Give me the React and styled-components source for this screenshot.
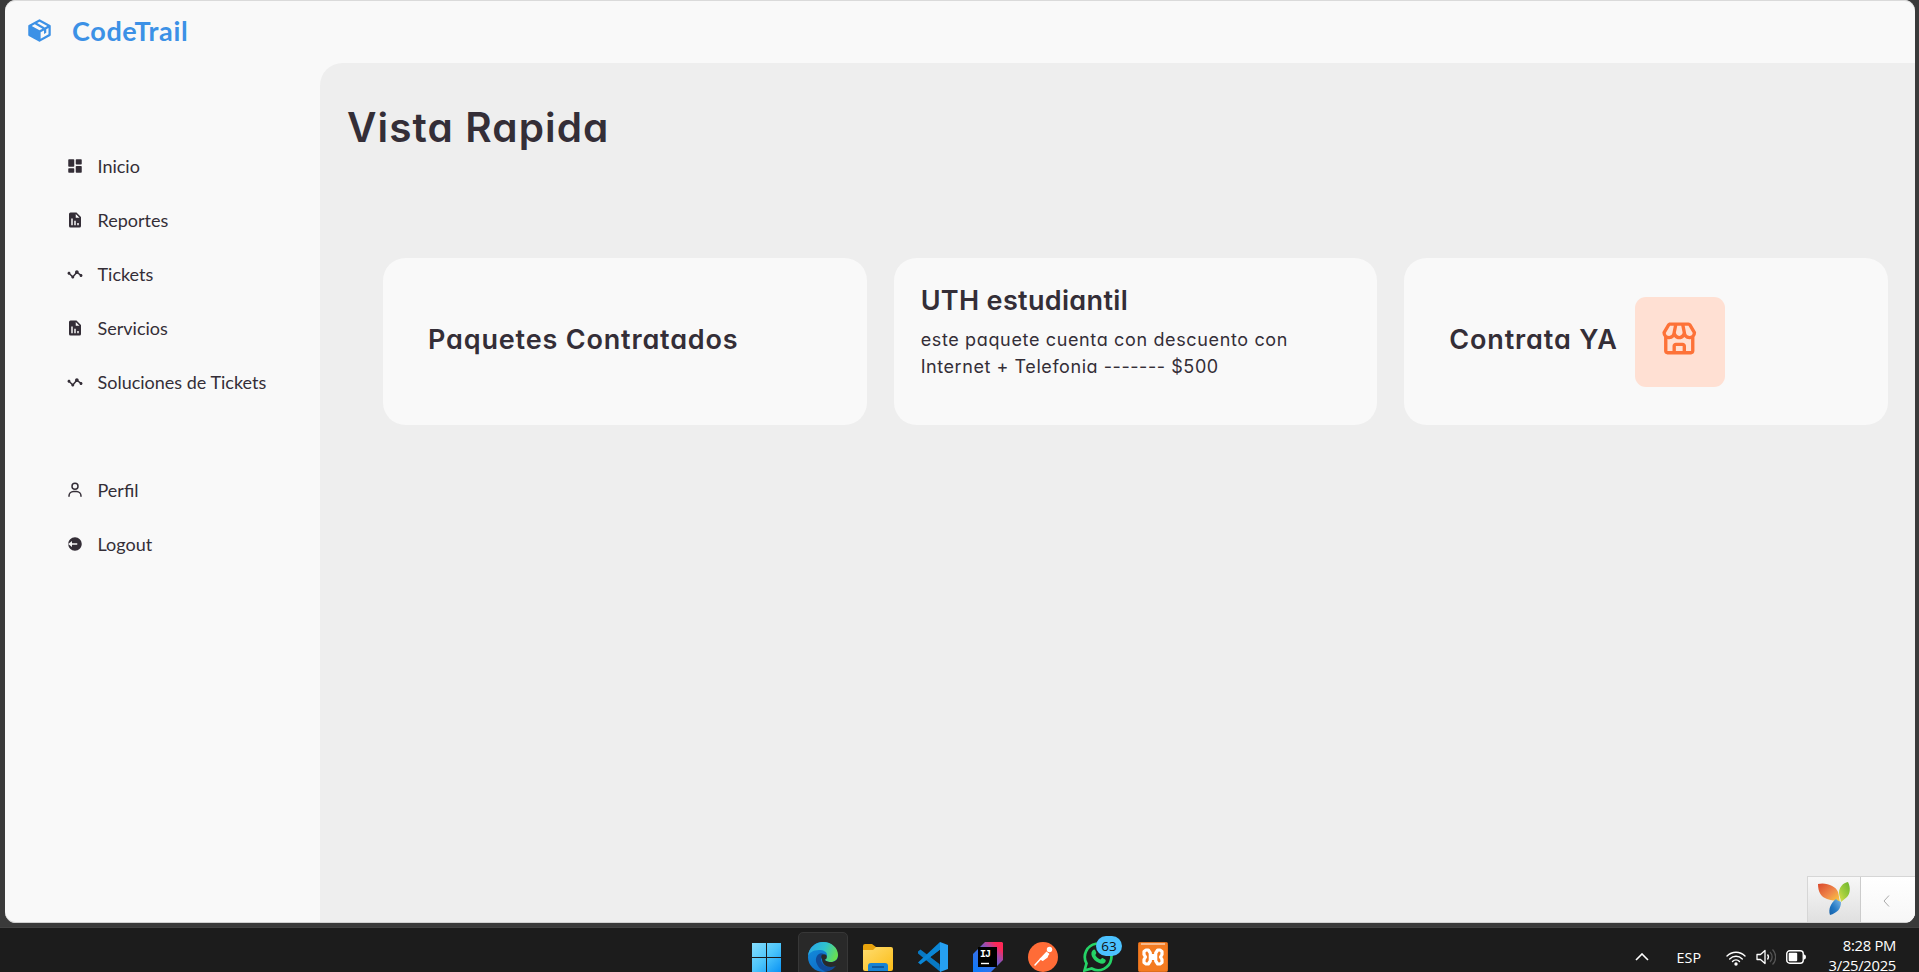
import React from 'react';
import styled, { createGlobalStyle } from 'styled-components';
import {
  BiSolidPackage,
  BiSolidDashboard,
  BiSolidReport,
  BiStats,
  BiUser,
  BiSolidLogOutCircle,
  BiStore,
} from 'react-icons/bi';

const GlobalStyle = createGlobalStyle`
  * { box-sizing: border-box; margin: 0; padding: 0; }
  html, body { background: #1c1c1c; overflow: hidden; }
  svg { display: block; }
`;

const Desktop = styled.div`
  width: 1919px;
  height: 972px;
  display: flex;
  flex-direction: column;
  background: #1c1c1c;
`;

const Frame = styled.div`
  height: 928px;
  padding: 0 4px 5px 5px;
  background: #3a3a3a;
  border-bottom: 1px solid #424242;
`;

const BrowserWindow = styled.div`
  position: relative;
  display: flex;
  width: 1910px;
  height: 923px;
  background: #f9f9f9;
  border-radius: 11px;
  overflow: hidden;
  box-shadow: inset 0 1px 0 #dadada, inset 0 -1px 0 #d0d0d0;
  color: #342e37;
  font-family: Lato, sans-serif;
`;

const Sidebar = styled.aside`
  width: 315px;
  flex: none;
`;

const Brand = styled.div`
  display: flex;
  align-items: center;
  height: 63px;
  padding-bottom: 2px;
  color: #3c91e6;
  font-size: 27px;
  font-weight: 700;
  letter-spacing: 0.65px;
`;

const BrandIcon = styled.span`
  width: 67px;
  display: flex;
  justify-content: center;
  padding-left: 1px;
`;

const Menu = styled.ul`
  list-style: none;
  padding-left: 43px;
  margin-top: ${(p) => p.$top}px;
`;

const MenuItem = styled.li`
  display: flex;
  align-items: center;
  height: 54px;
  font-size: 18px;
`;

const MenuIcon = styled.span`
  width: 49.5px;
  display: flex;
  justify-content: center;
  padding-left: 5px;
  font-size: 18px;
`;

const Column = styled.div`
  flex: 1;
  padding-top: 63px;
`;

const Content = styled.main`
  height: 859px;
  padding: 40px 27px 0;
  background: #eee;
  border-radius: 22.5px 0 0 0;
  font-family: Inter, sans-serif;
  font-feature-settings: 'cv11';
`;

const PageTitle = styled.h1`
  height: 51px;
  line-height: 49px;
  font-size: 40.5px;
  font-weight: 600;
  letter-spacing: 1.1px;
`;

const Cards = styled.section`
  display: grid;
  grid-template-columns: repeat(3, 1fr);
  gap: 27px;
  margin-top: 104px;
  padding-left: 36px;
`;

const Card = styled.article`
  display: flex;
  align-items: center;
  height: 167px;
  padding: 0 27px 0 ${(p) => p.$left}px;
  background: #f9f9f9;
  border-radius: 22.5px;
`;

const CardTitle = styled.h3`
  padding-bottom: ${(p) => p.$lift || 0}px;
  font-size: 27px;
  line-height: 36px;
  font-weight: 600;
  letter-spacing: ${(p) => p.$spacing}px;
  white-space: nowrap;
`;

const CardBody = styled.div`
  height: 118px;
`;

const CardText = styled.p`
  margin-top: ${(p) => (p.$first ? 7 : 0)}px;
  font-size: 18px;
  line-height: 27px;
  letter-spacing: ${(p) => p.$spacing}px;
  white-space: nowrap;
`;

const StoreTile = styled.div`
  display: flex;
  justify-content: center;
  width: 90px;
  height: 90px;
  margin-left: 17px;
  padding: 22px 1px 0 0;
  border-radius: 11px;
  background: #ffe0d3;
  color: #fd7238;
  font-size: 40.5px;
`;

const DebugBar = styled.div`
  position: absolute;
  right: 0;
  bottom: 1px;
  display: flex;
  width: 108px;
  height: 46px;
  border: 1px solid #d6d6d6;
  border-right: 0;
  border-bottom: 0;
`;

const DebugLogo = styled.div`
  width: 53px;
  background: linear-gradient(#f7f7f7, #e0e0e0);
  border-right: 1px solid #ccc;
`;

const DebugToggle = styled.div`
  flex: 1;
  display: flex;
  align-items: center;
  justify-content: center;
  padding: 2px 3px 0 0;
  background: linear-gradient(#fff, #f7f7f7);
`;

const Taskbar = styled.footer`
  display: flex;
  height: 44px;
  padding-left: 742px;
  color: #fff;
  font-family: 'Open Sans', sans-serif;
  overflow: hidden;
`;

const AppSlot = styled.div`
  position: relative;
  flex: none;
  width: 50px;
  height: 50px;
  margin: 4px 5px 0 0;
  padding: 9px;
  border-radius: 5px;
  border: 1px solid ${(p) => (p.$active ? '#373737' : 'transparent')};
  background: ${(p) => (p.$active ? '#292929' : 'transparent')};

  &:first-child { margin-right: 6px; }
`;

const Badge = styled.span`
  position: absolute;
  left: 22px;
  top: 3px;
  width: 26px;
  height: 20px;
  border-radius: 10px;
  background: #4cc2ff;
  color: #111;
  font-size: 13.5px;
  line-height: 20px;
  text-align: center;
`;

const Tray = styled.div`
  display: flex;
  flex: 1;
  justify-content: flex-end;
  padding-right: 23px;
`;

const TrayItem = styled.div`
  height: ${(p) => p.$h || 60}px;
  margin-right: ${(p) => p.$gap}px;
  display: flex;
  align-items: center;
  font-size: 14.3px;
`;

const Clock = styled.div`
  width: 70px;
  padding-top: 8px;
  text-align: right;
  font-size: 14.8px;
  line-height: 19.5px;
  letter-spacing: -0.3px;
  white-space: nowrap;
`;

const mainItems = [
  ['Inicio', BiSolidDashboard],
  ['Reportes', BiSolidReport],
  ['Tickets', BiStats],
  ['Servicios', BiSolidReport],
  ['Soluciones de Tickets', BiStats],
];

const accountItems = [
  ['Perfil', BiUser],
  ['Logout', BiSolidLogOutCircle],
];

function MenuList({ items, top }) {
  return (
    <Menu $top={top}>
      {items.map(([label, Icon]) => (
        <MenuItem key={label}>
          <MenuIcon><Icon /></MenuIcon>
          {label}
        </MenuItem>
      ))}
    </Menu>
  );
}

function YiiLogo() {
  return (
    <svg width="52" height="45" viewBox="0 0 52 45">
      <defs>
        <linearGradient id="yo" x1="0" y1="0" x2="1" y2="1">
          <stop offset="0" stopColor="#d9472b" /><stop offset=".55" stopColor="#f08a4b" /><stop offset="1" stopColor="#fbd23c" />
        </linearGradient>
        <linearGradient id="yg" x1="1" y1="0" x2="0" y2="1">
          <stop offset="0" stopColor="#6cb52d" /><stop offset=".6" stopColor="#a5cf3f" /><stop offset="1" stopColor="#e4e04a" />
        </linearGradient>
        <linearGradient id="yb" x1="1" y1="0" x2="0" y2="1">
          <stop offset="0" stopColor="#7fb9e6" /><stop offset=".6" stopColor="#2378c3" /><stop offset="1" stopColor="#155fa8" />
        </linearGradient>
      </defs>
      <path d="M10 7c8-2 18 2 20 8 1 3 1 7 2 10-4-2-8-1-13-3C13 20 10 15 10 7z" fill="url(#yo)" />
      <path d="M40 5c3 6 2 12-1 15-2 2-4 3-6 5 0-3-2-6-2-9 0-6 4-10 9-11z" fill="url(#yg)" />
      <path d="M28 22c2 2 4 2 5 3 0 7-4 11-11 13-2-6 1-12 6-16z" fill="url(#yb)" />
    </svg>
  );
}

function WindowsLogo() {
  return (
    <svg width="30" height="30" viewBox="0 0 30 30">
      <defs>
        <linearGradient id="win" gradientUnits="userSpaceOnUse" x1="1" y1="1" x2="29" y2="30">
          <stop offset="0" stopColor="#84ddfd" /><stop offset=".5" stopColor="#4cc5fb" /><stop offset="1" stopColor="#0a93f5" />
        </linearGradient>
      </defs>
      <path d="M0 1h14v14H0zM15 1h14v14H15zM0 16h14v14H0zM15 16h14v14H15z" fill="url(#win)" />
    </svg>
  );
}

function EdgeLogo() {
  return (
    <svg width="30" height="30" viewBox="0 0 30 30">
      <defs>
        <linearGradient id="e1" x1="0" y1=".3" x2="1" y2=".6">
          <stop offset="0" stopColor="#2aa7e6" /><stop offset=".5" stopColor="#2fc3cf" /><stop offset="1" stopColor="#6be04a" />
        </linearGradient>
        <linearGradient id="e2" x1="0" y1="0" x2=".6" y2="1">
          <stop offset="0" stopColor="#1592df" /><stop offset="1" stopColor="#0c6ac6" />
        </linearGradient>
      </defs>
      <circle cx="15" cy="15" r="15" fill="url(#e2)" />
      <path d="M0 14C1 5 8 0 15 0c9 0 15 6 15 13 0 5-4 7-7 7-4 0-6-1-6-3 0-1 2-1 2-4 0-3-3-5-8-5-6 0-10 3-11 6z" fill="url(#e1)" />
      <path d="M11 12c-3 2-4 6-2 10 2 5 7 8 12 7 3-1 5-3 7-5-8 3-15-1-15-7 0-2 1-4 3-5-2-1-4-1-5 0z" fill="#114a97" />
      <path d="M30 14v8l-2 2c-8 3-14-1-14-7 0-2 1-3 3-4-2 5 1 7 6 7 3 0 7-2 7-6z" fill="#292929" />
      <circle cx="16" cy="15" r="2.8" fill="#292929" />
    </svg>
  );
}

function FolderIcon() {
  return (
    <svg width="30" height="30" viewBox="0 0 30 30">
      <defs>
        <linearGradient id="fo" x1="0" y1="0" x2="1" y2="1">
          <stop offset="0" stopColor="#ffdd70" /><stop offset="1" stopColor="#fbbc16" />
        </linearGradient>
      </defs>
      <path d="M0 4a2 2 0 0 1 2-2h7l4 3h13v6H0z" fill="#e8a30c" />
      <path d="M0 8h10l3-3h15a2 2 0 0 1 2 2v20a2 2 0 0 1-2 2H2a2 2 0 0 1-2-2z" fill="url(#fo)" />
      <path d="M5 29v-5a3 3 0 0 1 3-3h14a3 3 0 0 1 3 3v5z" fill="#1683d4" />
      <path d="M9 25h12" stroke="#0c4a88" strokeWidth="1.4" />
    </svg>
  );
}

function CodeLogo() {
  return (
    <svg width="30" height="30" viewBox="0 0 30 30">
      <path d="M0 9.500l2.500-2 19 14.500 1 8L0 11.500z" fill="#0879c4" />
      <path d="M0 20.500L22 0v8L2.500 22.500 0 20.500z" fill="#0a86d6" />
      <path d="M22 0l8 3v24l-8 3z" fill="#26a0f2" />
      <path d="M22 8v14l-9-7z" fill="#1c1c1c" />
    </svg>
  );
}

function IdeaLogo() {
  return (
    <svg width="30" height="30" viewBox="0 0 30 30">
      <defs>
        <linearGradient id="ij" x1="0" y1="1" x2="1" y2="0">
          <stop offset="0" stopColor="#087cfa" /><stop offset=".45" stopColor="#3b6fe8" /><stop offset=".7" stopColor="#b0459f" /><stop offset=".85" stopColor="#fe2857" />
        </linearGradient>
      </defs>
      <path d="M12 0h17l1 1v17L18 30H0V12z" fill="url(#ij)" />
      <path d="M5 5h19v20H5z" fill="#000" />
      <text x="7" y="15" fill="#fff" fontFamily="Liberation Mono, monospace" fontWeight="700" fontSize="10" letterSpacing="-1">IJ</text>
      <path d="M8 21.500h8" stroke="#fff" strokeWidth="1.4" />
    </svg>
  );
}

function PostmanLogo() {
  return (
    <svg width="30" height="30" viewBox="0 0 30 30">
      <circle cx="15" cy="15" r="15" fill="#ff6c37" />
      <circle cx="21.500" cy="7.500" r="2.700" fill="#fff" />
      <path d="M18.500 9.500l3 2.500-7 7-3-2z" fill="#fff" />
      <path d="M13 16.500l-6 6.500M20 12l-1 3-4 3" stroke="#fff" strokeWidth="1.500" fill="none" strokeLinecap="round" />
    </svg>
  );
}

function WhatsAppLogo() {
  return (
    <svg width="30" height="30" viewBox="0 0 30 30">
      <path d="M1.500 28.500l2-7.200A13.300 13.300 0 1 1 8.700 26.500z" fill="none" stroke="#25d366" strokeWidth="2.700" />
      <path d="M10 8c1-1 2-.5 2.300.3l1 2.400c.3.700-1 2-1 2.300 1 2.200 3 3.800 5 4.600.6 0 1.500-1.800 2.200-1.500l2.700 1.300c1 .6.500 2.300-.5 3.300-1.300 1.300-3.500 1.300-6 .1-3.700-1.600-5.500-3.800-6.700-6.300C7.800 11.500 8.500 9.300 10 8z" fill="#25d366" />
    </svg>
  );
}

function XamppLogo() {
  return (
    <svg width="30" height="30" viewBox="0 0 30 30">
      <rect width="30" height="30" rx="3" fill="#f47b20" stroke="#c9641a" />
      <path d="M3 2h24" stroke="#f9b98a" strokeWidth="2" />
      <g fill="none" stroke="#fff" strokeWidth="3.200" strokeLinecap="round" strokeLinejoin="round">
        <path d="M12.300 11l-2-3H8L6 9.500v3L7.500 15 6 17.500v3L8 22h2.300l2-3v-4z" />
        <path d="M17.700 11l2-3H22l2 1.500v3L22.500 15l1.500 2.500v3L22 22h-2.300l-2-3v-4z" />
        <path d="M12 15h6" strokeWidth="6" strokeLinecap="butt" />
      </g>
    </svg>
  );
}

export default function App() {
  return (
    <Desktop>
      <GlobalStyle />
      <Frame>
        <BrowserWindow>
          <Sidebar>
            <Brand>
              <BrandIcon><BiSolidPackage /></BrandIcon>
              CodeTrail
            </Brand>
            <MenuList items={mainItems} top={76} />
            <MenuList items={accountItems} top={54} />
          </Sidebar>
          <Column>
            <Content>
              <PageTitle>Vista Rapida</PageTitle>
              <Cards>
                <Card $left={45}>
                  <CardTitle $spacing={0.83} $lift={3}>Paquetes Contratados</CardTitle>
                </Card>
                <Card $left={27}>
                  <CardBody>
                    <CardTitle $spacing={0.33}>UTH estudiantil</CardTitle>
                    <CardText $first $spacing={0.64}>este paquete cuenta con descuento con</CardText>
                    <CardText $spacing={0.56}>Internet + Telefonia ------- $500</CardText>
                  </CardBody>
                </Card>
                <Card $left={45}>
                  <CardTitle $spacing={0.85} $lift={3}>Contrata YA</CardTitle>
                  <StoreTile><BiStore /></StoreTile>
                </Card>
              </Cards>
            </Content>
          </Column>
          <DebugBar>
            <DebugLogo><YiiLogo /></DebugLogo>
            <DebugToggle>
              <svg width="7" height="12" viewBox="0 0 7 12">
                <path d="M6 .5L1 6l5 5.500" fill="none" stroke="#aaa" />
              </svg>
            </DebugToggle>
          </DebugBar>
        </BrowserWindow>
      </Frame>
      <Taskbar>
        <AppSlot><WindowsLogo /></AppSlot>
        <AppSlot $active><EdgeLogo /></AppSlot>
        <AppSlot><FolderIcon /></AppSlot>
        <AppSlot><CodeLogo /></AppSlot>
        <AppSlot><IdeaLogo /></AppSlot>
        <AppSlot><PostmanLogo /></AppSlot>
        <AppSlot><WhatsAppLogo /><Badge>63</Badge></AppSlot>
        <AppSlot><XamppLogo /></AppSlot>
        <Tray>
          <TrayItem $gap={28} $h={58}>
            <svg width="14" height="8" viewBox="0 0 14 8">
              <path d="M1 7l6-6 6 6" fill="none" stroke="#fff" strokeWidth="1.600" />
            </svg>
          </TrayItem>
          <TrayItem $gap={25} $h={58}>ESP</TrayItem>
          <TrayItem $gap={10} $h={59}>
            <svg width="20" height="16" viewBox="0 0 20 16">
              <g fill="none" stroke="#fff" strokeWidth="1.400" strokeLinecap="round">
                <path d="M1 6a12.700 12.700 0 0 1 18 0M3.700 8.900a8.900 8.900 0 0 1 12.600 0M6.500 11.500a5 5 0 0 1 7 0" />
              </g>
              <circle cx="10" cy="14" r="1.700" fill="#fff" />
            </svg>
          </TrayItem>
          <TrayItem $gap={10} $h={58}>
            <svg width="20" height="18" viewBox="0 0 20 18">
              <path d="M1 6.500h3.500L9 2.500v13L4.500 11.500H1z" fill="none" stroke="#fff" strokeWidth="1.300" strokeLinejoin="round" />
              <path d="M11.500 6.500a4 4 0 0 1 0 5" fill="none" stroke="#fff" strokeWidth="1.300" />
              <path d="M14 4a7 7 0 0 1 0 10M16.500 1.500a10.500 10.500 0 0 1 0 15" fill="none" stroke="#555" strokeWidth="1.300" />
            </svg>
          </TrayItem>
          <TrayItem $gap={20} $h={58}>
            <svg width="20" height="14" viewBox="0 0 20 14">
              <rect x=".75" y=".75" width="16.500" height="12.500" rx="3" fill="none" stroke="#fff" strokeWidth="1.400" />
              <rect x="2.700" y="2.700" width="8.500" height="8.600" rx="1" fill="#fff" />
              <path d="M18 4.500c2.600 0 2.600 5 0 5z" fill="#fff" />
            </svg>
          </TrayItem>
          <Clock>
            <div>8:28 PM</div>
            <div>3/25/2025</div>
          </Clock>
        </Tray>
      </Taskbar>
    </Desktop>
  );
}
